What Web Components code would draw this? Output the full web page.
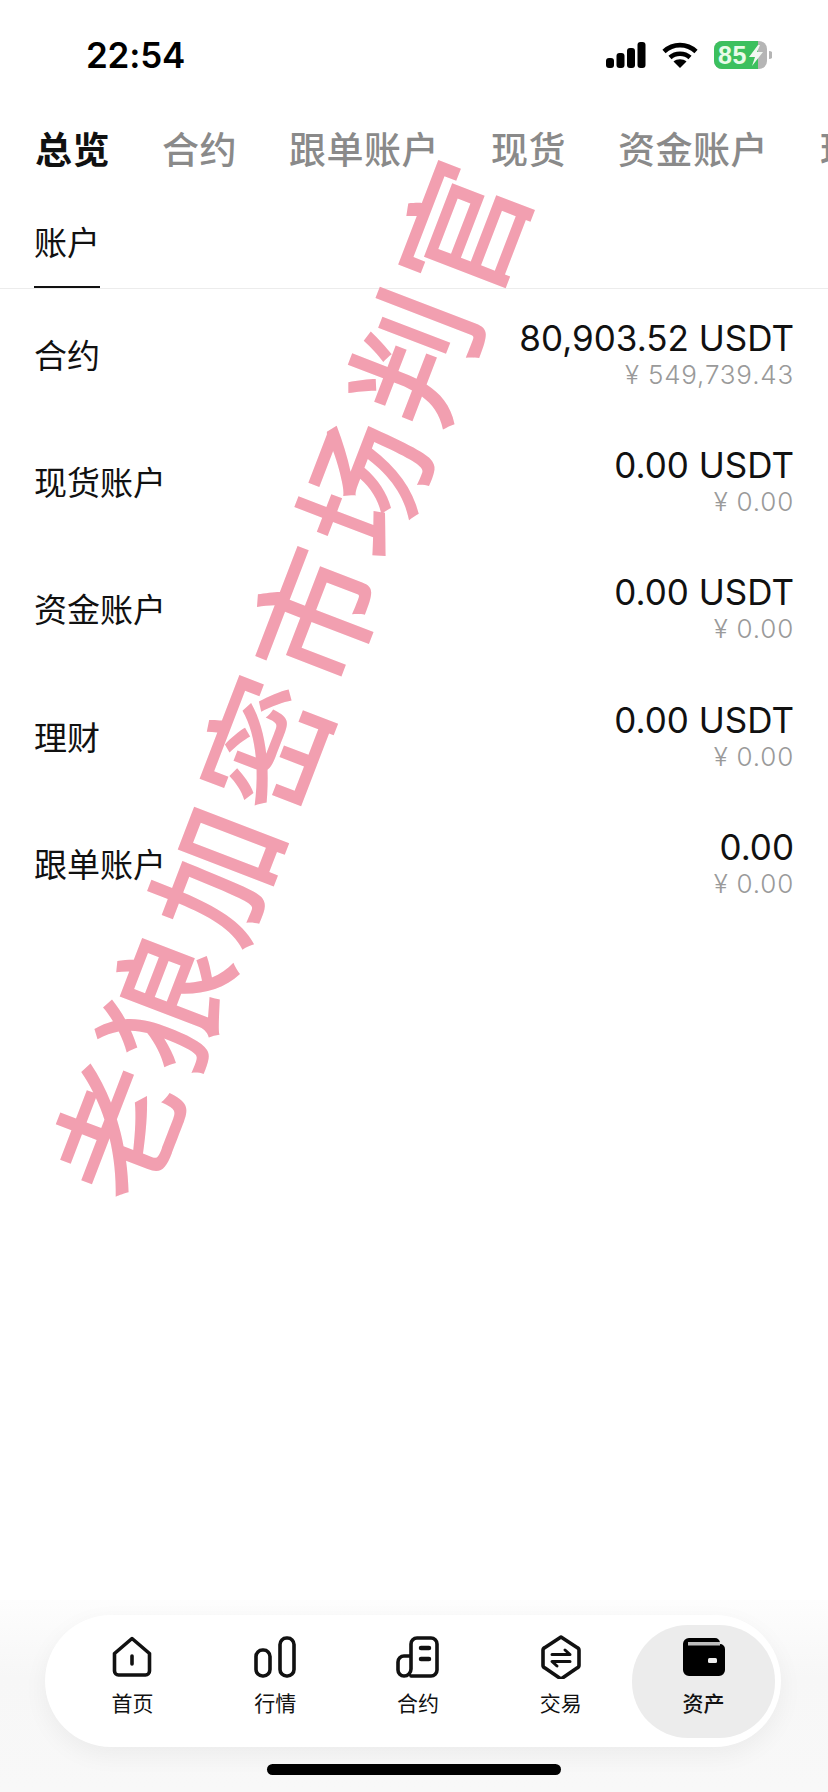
<!doctype html>
<html lang="zh">
<head>
<meta charset="utf-8">
<title>资产</title>
<style>
  html, body { margin: 0; padding: 0; background: #fff; }
  body { font-family: "Noto Sans CJK SC", "Noto Sans", sans-serif; }
</style>
</head>
<body>
<asset-page>
  <status-bar slot="top" time="22:54" battery="85"></status-bar>
  <tab-strip slot="top">
    <tab-item active>总览</tab-item>
    <tab-item>合约</tab-item>
    <tab-item>跟单账户</tab-item>
    <tab-item>现货</tab-item>
    <tab-item>资金账户</tab-item>
    <tab-item>理财</tab-item>
  </tab-strip>
  <sub-tabs slot="top">账户</sub-tabs>

  <account-row label="合约" amount="80,903.52" unit="USDT" cny="549,739.43"></account-row>
  <account-row label="现货账户" amount="0.00" unit="USDT" cny="0.00"></account-row>
  <account-row label="资金账户" amount="0.00" unit="USDT" cny="0.00"></account-row>
  <account-row label="理财" amount="0.00" unit="USDT" cny="0.00"></account-row>
  <account-row label="跟单账户" amount="0.00" cny="0.00"></account-row>

  <bottom-nav slot="bottom">
    <nav-item icon="home">首页</nav-item>
    <nav-item icon="market">行情</nav-item>
    <nav-item icon="contract">合约</nav-item>
    <nav-item icon="trade">交易</nav-item>
    <nav-item icon="wallet" active>资产</nav-item>
  </bottom-nav>

  <water-mark slot="overlay">老狼加密市场判官</water-mark>
</asset-page>

<script>
class AssetPage extends HTMLElement {
  constructor() {
    super();
    const shadow = this.attachShadow({ mode: 'open' });
    shadow.innerHTML = `
      <style>
        :host {
          display: flex;
          flex-direction: column;
          position: relative;
          width: 828px;
          height: 1792px;
          overflow: hidden;
          background: #fff;
          color: #111;
        }
        .list {
          flex: 1;
          display: flex;
          flex-direction: column;
          padding-top: 1px;
        }
      </style>
      <slot name="top"></slot>
      <div class="list"><slot></slot></div>
      <slot name="bottom"></slot>
      <slot name="overlay"></slot>
    `;
  }
}

class StatusBar extends HTMLElement {
  constructor() {
    super();
    const shadow = this.attachShadow({ mode: 'open' });
    shadow.innerHTML = `
      <style>
        :host {
          display: flex;
          align-items: center;
          justify-content: space-between;
          height: 110px;
          padding: 0 56px 0 86px;
          box-sizing: border-box;
        }
        .time {
          font: 600 35px/1 Inter, "Liberation Sans", sans-serif;
          color: #000;
          letter-spacing: -0.2px;
        }
        .icons { display: flex; align-items: center; gap: 16px; }
        svg { display: block; }
        .battery {
          position: relative;
          width: 58px;
          height: 28px;
        }
        .battery span {
          position: absolute;
          left: 4px;
          top: 0;
          font: 700 25px/28px "Liberation Sans", sans-serif;
          color: #e9fbe9;
          letter-spacing: 0.5px;
        }
      </style>
      <span class="time"></span>
      <div class="icons">
        <svg width="40" height="26" viewBox="0 0 40 26" fill="#000">
          <rect x="0" y="16" width="8" height="10" rx="3"/>
          <rect x="10.5" y="11" width="8" height="15" rx="3"/>
          <rect x="21" y="6" width="8" height="20" rx="3"/>
          <rect x="31.5" y="0" width="8" height="26" rx="3"/>
        </svg>
        <svg width="36" height="26" viewBox="0 0 36 26" fill="none" stroke="#000" stroke-width="4.6">
          <path d="M2 9.5C11 1 25 1 34 9.5"/>
          <path d="M8 15.5C13.5 10.5 22.500 10.500 28 15.5"/>
          <path d="M18 26L11.500 19.500C15 16.500 21 16.500 24.500 19.500Z" fill="#000" stroke="none"/>
        </svg>
        <div class="battery">
          <svg width="58" height="28" viewBox="0 0 58 28">
            <rect x="0" y="0" width="53" height="28" rx="8" fill="#b5b5b5"/>
            <path d="M8 0H44V28H8A8 8 0 0 1 0 20V8A8 8 0 0 1 8 0Z" fill="#3cc05e"/>
            <path d="M55 10a4 4 0 0 1 0 8Z" fill="#b5b5b5"/>
            <path d="M44 4L35 16H41L38 25L49 11H43L46 4Z" fill="#f2f7f2"/>
          </svg>
          <span></span>
        </div>
      </div>
    `;
    shadow.querySelector('.time').textContent = this.getAttribute('time');
    shadow.querySelector('.battery span').textContent = this.getAttribute('battery');
  }
}

class TabStrip extends HTMLElement {
  constructor() {
    super();
    const shadow = this.attachShadow({ mode: 'open' });
    shadow.innerHTML = `
      <style>
        :host {
          display: flex;
          gap: 52px;
          height: 76px;
          padding-left: 35px;
          align-items: center;
          white-space: nowrap;
          overflow: hidden;
        }
      </style>
      <slot></slot>
    `;
  }
}

class TabItem extends HTMLElement {
  constructor() {
    super();
    const shadow = this.attachShadow({ mode: 'open' });
    shadow.innerHTML = `
      <style>
        :host {
          display: block;
          flex: none;
          font: 500 37px/50px "Noto Sans CJK SC", sans-serif;
          color: #8a8a8a;
          letter-spacing: 0.5px;
        }
        :host([active]) { color: #111; font-weight: 700; }
      </style>
      <slot></slot>
    `;
  }
}

class SubTabs extends HTMLElement {
  constructor() {
    super();
    const shadow = this.attachShadow({ mode: 'open' });
    shadow.innerHTML = `
      <style>
        :host {
          display: block;
          height: 103px;
          box-sizing: border-box;
          padding: 0 0 0 34px;
          border-bottom: 1px solid #ececec;
        }
        .tab {
          display: inline-block;
          height: 102px;
          box-sizing: border-box;
          padding-top: 32px;
          border-bottom: 2px solid #111;
          font: 400 33px/46px "Noto Sans CJK SC", sans-serif;
          color: #111;
        }
      </style>
      <span class="tab"><slot></slot></span>
    `;
  }
}

class AccountRow extends HTMLElement {
  constructor() {
    super();
    const shadow = this.attachShadow({ mode: 'open' });
    shadow.innerHTML = `
      <style>
        :host {
          display: flex;
          align-items: center;
          justify-content: space-between;
          height: 127.3px;
          padding: 0 34px;
          box-sizing: border-box;
        }
        .label { font: 400 33px/44px "Noto Sans CJK SC", sans-serif; color: #111; }
        .right { text-align: right; }
        .amount {
          font: 400 35px/42px Inter, "Liberation Sans", sans-serif;
          color: #111;
        }
        .cny {
          font: 300 26px/32px Inter, "Liberation Sans", sans-serif;
          color: #9a9a9a;
          letter-spacing: 0.8px;
        }
      </style>
      <span class="label"></span>
      <div class="right">
        <div class="amount"></div>
        <div class="cny"></div>
      </div>
    `;
    const unit = this.getAttribute('unit');
    shadow.querySelector('.label').textContent = this.getAttribute('label');
    shadow.querySelector('.amount').textContent = this.getAttribute('amount') + (unit ? ' ' + unit : '');
    shadow.querySelector('.cny').textContent = '¥ ' + this.getAttribute('cny');
  }
}

class BottomNav extends HTMLElement {
  constructor() {
    super();
    const shadow = this.attachShadow({ mode: 'open' });
    shadow.innerHTML = `
      <style>
        :host {
          display: block;
          height: 192px;
          padding: 15px 47px 0 45px;
          box-sizing: border-box;
          background: linear-gradient(#fdfdfd, #f7f7f7 40%, #f8f8f8);
        }
        .pill {
          display: flex;
          align-items: stretch;
          height: 132px;
          padding: 10px 6px 9px 16px;
          box-sizing: border-box;
          border-radius: 66px;
          background: #fff;
          box-shadow: 0 8px 24px rgba(0, 0, 0, 0.05);
        }
        .home {
          width: 294px;
          height: 11px;
          margin: 17px auto 0 222px;
          border-radius: 6px;
          background: #000;
        }
      </style>
      <div class="pill"><slot></slot></div>
      <div class="home"></div>
    `;
  }
}

const NAV_ICONS = {
  home: `<path d="M22 3.500L39.500 18.500V36a4 4 0 0 1-4 4H8.500a4 4 0 0 1-4-4V18.500Z" stroke-linejoin="round"/>
         <path d="M22 21V29"/>`,
  market: `<rect x="3" y="15" width="14" height="26" rx="6.500"/>
           <rect x="27" y="3" width="14" height="38" rx="6.500"/>`,
  contract: `<path d="M15 41H35a6 6 0 0 0 6-6V9a6 6 0 0 0-6-6H21a6 6 0 0 0-6 6V34a7 7 0 0 1-7 7a6 6 0 0 1-6-6V27a6 6 0 0 1 6-6h7"/>
             <path d="M25 13H33M25 24H33" stroke-width="4.500"/>`,
  trade: `<path d="M22 2L38 12.500a3 3 0 0 1 2 3V30a3 3 0 0 1-2 3L22 44L6 33a3 3 0 0 1-2-3V15.500a3 3 0 0 1 2-3Z" stroke-linejoin="round"/>
          <path d="M13 19.500H31L26 15M31 26.500H13L18 31" stroke-width="3" stroke-linejoin="round"/>`,
  wallet: `<path d="M8 3H33a5 5 0 0 1 5 5V9a5 5 0 0 1 5 5V35a6 6 0 0 1-6 6H7a6 6 0 0 1-6-6V9a6 6 0 0 1 6-6Z" fill="#000" stroke="none"/>
           <rect x="6" y="7" width="32" height="3.500" fill="#bdbdbd" stroke="none"/>
           <rect x="26" y="23" width="9" height="5" rx="1.500" fill="#eee" stroke="none"/>`
};

class NavItem extends HTMLElement {
  constructor() {
    super();
    const shadow = this.attachShadow({ mode: 'open' });
    shadow.innerHTML = `
      <style>
        :host {
          display: flex;
          flex-direction: column;
          align-items: center;
          flex: 1;
          padding-top: 10px;
          box-sizing: border-box;
          border-radius: 56px;
          font: 400 21px/28px "Noto Sans CJK SC", sans-serif;
          color: #111;
        }
        :host([active]) { background: #ececec; font-weight: 500; }
        svg { display: block; margin-bottom: 9px; }
      </style>
      <svg width="44" height="44" viewBox="0 0 44 44" fill="none" stroke="#111" stroke-width="3.600" stroke-linecap="round">
        ${NAV_ICONS[this.getAttribute('icon')]}
      </svg>
      <slot></slot>
    `;
  }
}

class WaterMark extends HTMLElement {
  constructor() {
    super();
    const shadow = this.attachShadow({ mode: 'open' });
    shadow.innerHTML = `
      <style>
        :host {
          position: absolute;
          left: 285px;
          top: 674px;
          transform: translate(-50%, -50%) rotate(-69deg);
          font: 500 130px/1 "Noto Sans CJK SC", sans-serif;
          letter-spacing: 8px;
          color: #f29fb0;
          white-space: nowrap;
          pointer-events: none;
        }
      </style>
      <slot></slot>
    `;
  }
}

customElements.define('asset-page', AssetPage);
customElements.define('status-bar', StatusBar);
customElements.define('tab-strip', TabStrip);
customElements.define('tab-item', TabItem);
customElements.define('sub-tabs', SubTabs);
customElements.define('account-row', AccountRow);
customElements.define('bottom-nav', BottomNav);
customElements.define('nav-item', NavItem);
customElements.define('water-mark', WaterMark);
</script>
</body>
</html>
